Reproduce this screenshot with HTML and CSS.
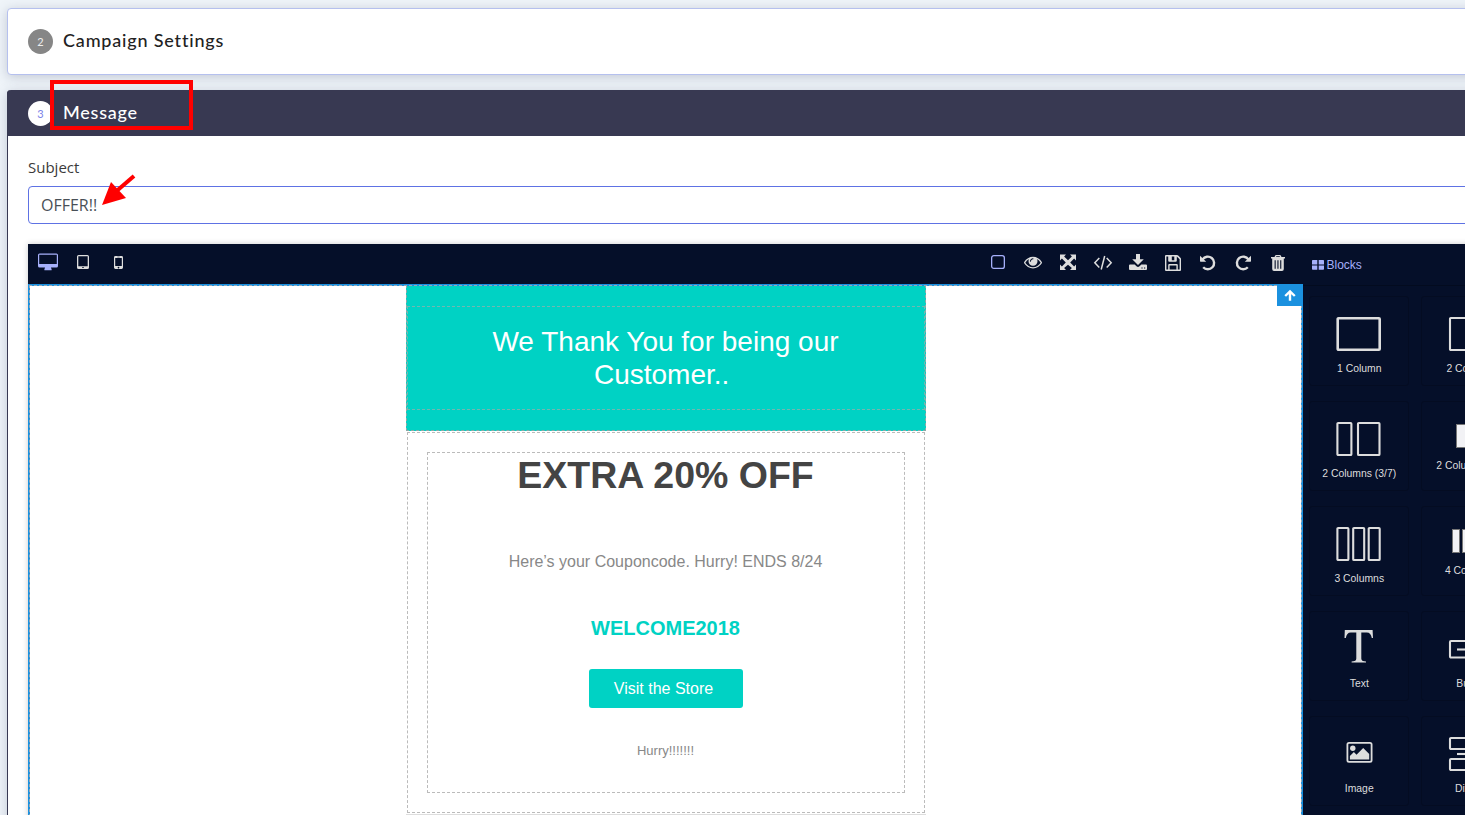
FILE: index.html
```html
<!DOCTYPE html>
<html lang="en">
<head>
<meta charset="utf-8">
<title>Campaign</title>
<link rel="stylesheet" href="styles.css">
</head>
<body>
<main class="page">
  <section class="card settings">
    <span class="step">2</span><h2 class="card-title title-settings">Campaign Settings</h2>
  </section>
  <section class="card message">
    <header class="message-head">
      <span class="step active">3</span><h2 class="card-title title-message">Message</h2>
    </header>
    <div class="message-body">
      <label class="subject-label">Subject</label>
      <div class="subject-input"><span class="subject-value">OFFER!!</span></div>
      <div class="editor">
        <div class="workspace">
          <div class="toolbar">
            <div class="tools devices">
              <span class="tool lit"><svg width="20" height="18" viewBox="0 0 20 18"><path fill="currentColor" fill-rule="evenodd" d="M1.600 .5h16.800Q20 .5 20 2.100v10.800q0 1.600-1.600 1.600H13q0 .9.600 1.600v1.200H6.400v-1.200q.6-.7.6-1.600H1.600Q0 14.500 0 12.900V2.100Q0 .5 1.600.5zM1.200 1.700v9.300h17.600V1.700z"/></svg></span>
              <span class="tool"><svg width="12" height="16" viewBox="0 0 12 16"><path fill="currentColor" fill-rule="evenodd" d="M1.600 1h8.800Q12 1 12 2.600v10.800q0 1.600-1.600 1.600H1.600Q0 15 0 13.400V2.600Q0 1 1.600 1zM1.300 2.300v9.900h9.400V2.300zM5.300 13.100v1h1.400v-1z"/></svg></span>
              <span class="tool phone"><svg width="9" height="16" viewBox="0 0 9 16"><path fill="currentColor" fill-rule="evenodd" d="M1.400 2h6.200Q9 2 9 3.400v10.200Q9 15 7.600 15H1.400Q0 15 0 13.600V3.400Q0 2 1.400 2zM1.200 4.100v8h6.600v-8zM3.300 2.800v.5h2.400v-.5zM4.500 12.800a.8.800 0 1 0 .01 0z"/></svg></span>
            </div>
            <div class="tools actions">
              <span class="tool lit"><svg width="16" height="16" viewBox="0 0 16 16"><rect x="1.650" y="1.650" width="12.700" height="12.700" rx="2.200" fill="none" stroke="currentColor" stroke-width="1.300"/></svg></span>
              <span class="tool"><svg width="18" height="18" viewBox="0 0 1792 1792"><path fill="currentColor" d="M1664 960q-152-236-381-353 61 104 61 225 0 185-131.500 316.500t-316.500 131.500-316.500-131.500-131.500-316.500q0-121 61-225-229 117-381 353 133 205 333.500 326.500t434.500 121.500 434.500-121.500 333.500-326.500zm-720-384q0-20-14-34t-34-14q-125 0-214.500 89.500t-89.500 214.500q0 20 14 34t34 14 34-14 14-34q0-86 61-147t147-61q20 0 34-14t14-34zm848 384q0 34-20 69-140 230-376.500 368.500t-499.500 138.500-499.500-139-376.500-368q-20-35-20-69t20-69q140-229 376.500-368t499.500-139 499.500 139 376.500 368q20 35 20 69z"/></svg></span>
              <span class="tool"><svg width="16" height="16" viewBox="0 0 16 16"><path fill="currentColor" d="M0 .5h6L4.100 2.400 8 6.300l3.900-3.900L10 .5h6v6l-1.900-1.900L10.200 8.500l3.900 3.900 1.900-1.900v5.500h-6l1.900-1.900L8 10.700l-3.900 3.400L6 16H0v-5.500l1.900 1.900 3.900-3.900L1.900 4.600 0 6.500z"/></svg></span>
              <span class="tool"><svg width="20" height="16" viewBox="0 0 20 16"><path fill="none" stroke="currentColor" stroke-width="1.500" d="M6.300 4 1.800 8.800l4.500 4.800M13.700 4l4.500 4.800-4.500 4.800M11.700 2 8.200 15.500"/></svg></span>
              <span class="tool"><svg width="18" height="17" viewBox="0 0 18 17"><path fill="currentColor" fill-rule="evenodd" d="M7 0h4v5.200h3.800L9 11 3.200 5.200H7zM1 10.500h4.700L7.500 12.300q1.500 1.200 3 0l1.800-1.800H17q1 0 1 1V15q0 1-1 1H1q-1 0-1-1v-3.500q0-1 1-1zM12.400 13.400v1h1.200v-1zm2.600 0v1h1.200v-1z"/></svg></span>
              <span class="tool low"><svg width="16" height="16" viewBox="0 0 16 16"><path fill="currentColor" fill-rule="evenodd" d="M1 0h11q.6 0 1.200.6l2.200 2.200q.6.600.6 1.200v11q0 1-1 1H1q-1 0-1-1V1Q0 0 1 0zM1.400 1.400v13.200h1.800V10q0-1 1-1h7.600q1 0 1 1v4.600h1.800V4.200L11.800 1.400v4.300q0 1-1 1H4.200q-1 0-1-1V1.400zM6.800 1.400v3.900h2.500V1.400zM4.600 10.400v4.200h6.800v-4.200z"/></svg></span>
              <span class="tool low"><svg width="16" height="16" viewBox="0 0 16 16"><path fill="none" stroke="currentColor" stroke-width="2.400" d="M2.600 4.400A6.300 6.300 0 1 1 3.200 12.300"/><path fill="currentColor" d="M0 .7 6.200 6.700H.6Q0 6.700 0 6z"/></svg></span>
              <span class="tool low"><svg class="flip" width="16" height="16" viewBox="0 0 16 16"><path fill="none" stroke="currentColor" stroke-width="2.400" d="M2.600 4.400A6.300 6.300 0 1 1 3.200 12.300"/><path fill="currentColor" d="M0 .7 6.200 6.700H.6Q0 6.700 0 6z"/></svg></span>
              <span class="tool low"><svg width="14" height="16" viewBox="0 0 14 16"><path fill="currentColor" fill-rule="evenodd" d="M5 0h4q.6 0 .9.700L10.500 2H14v1.500h-1.200V14q0 2-1.800 2H3q-1.800 0-1.800-2V3.500H0V2h3.500l.6-1.300Q4.400 0 5 0zM5.400 1.200 5 2h4l-.4-.8zM3.600 5.200v8.600h1.100V5.200zm2.800 0v8.600h1.100V5.200zm2.800 0v8.600h1.100V5.200z"/></svg></span>
            </div>
          </div>
          <div class="canvas">
            <span class="select-parent"><svg width="12" height="11" viewBox="0 0 12 11"><path d="M6 10.800V2M1.200 6 6 1.400 10.800 6" fill="none" stroke="#fff" stroke-width="2.400"/></svg></span>
            <div class="mail">
              <div class="hero"><div class="hero-cell"><p class="hero-text">We Thank You for being our<br>Customer..&nbsp;</p></div></div>
              <div class="offer">
                <div class="offer-cell">
                  <h1 class="offer-title">EXTRA 20% OFF</h1>
                  <p class="coupon-text">Here’s your Couponcode. Hurry! ENDS 8/24</p>
                  <p class="coupon-code">WELCOME2018</p>
                  <a class="store-button">Visit the Store</a>
                  <p class="hurry">Hurry!!!!!!!</p>
                </div>
              </div>
              <div class="mail-end"></div>
            </div>
          </div>
        </div>
        <aside class="panel">
          <div class="panel-tab"><svg width="12" height="10" viewBox="0 0 12 10"><path fill="currentColor" d="M.8 0h4.500v4.400H0V.8Q0 0 .8 0zm5.900 0h4.500q.8 0 .8.800v3.600H6.700zM0 5.400h5.300v4.400H.8Q0 9.800 0 9zm6.700 0H12V9q0 .8-.8.800H6.700z"/></svg><span>Blocks</span></div>
          <div class="blocks">
            <div class="block"><svg width="46" height="36" viewBox="0 0 46 36"><rect class="ln3" x="1.700" y="2.200" width="42" height="31.600" rx=".8"/></svg><span>1 Column</span></div>
            <div class="block"><svg width="46" height="36" viewBox="0 0 46 36"><rect class="ln" x="2" y="2" width="18" height="32" rx=".8"/><rect class="ln" x="25" y="2" width="18" height="32" rx=".8"/></svg><span>2 Columns</span></div>
            <div class="block"><svg width="46" height="36" viewBox="0 0 46 36"><rect class="ln" x="1.400" y="2" width="14" height="32" rx=".8"/><rect class="ln" x="22" y="2" width="21.500" height="32" rx=".8"/></svg><span>2 Columns (3/7)</span></div>
            <div class="block short"><svg width="30" height="24" viewBox="0 0 30 24"><rect class="solid" x=".5" y=".5" width="10" height="23"/><rect class="solid" x="13" y=".5" width="16" height="23"/></svg><span>2 Columns 3/7</span></div>
            <div class="block"><svg width="46" height="36" viewBox="0 0 46 36"><rect class="ln" x="1.400" y="2" width="11" height="32" rx=".8"/><rect class="ln" x="17.200" y="2" width="11" height="32" rx=".8"/><rect class="ln" x="32.700" y="2" width="11" height="32" rx=".8"/></svg><span>3 Columns</span></div>
            <div class="block short"><svg width="38" height="24" viewBox="0 0 38 24"><rect class="solid" x=".5" y=".5" width="7" height="23"/><rect class="solid" x="10.500" y=".5" width="7" height="23"/><rect class="solid" x="20.500" y=".5" width="7" height="23"/><rect class="solid" x="30.500" y=".5" width="7" height="23"/></svg><span>4 Columns</span></div>
            <div class="block"><svg width="46" height="36" viewBox="0 0 46 36"><path fill="currentColor" d="M8.800-1h27.800l.4 8h-1.200q-.8-5.600-5-5.600h-5.500v26q0 2.500 3 2.800l1.700.3v.9H15.600v-.9l1.700-.3q3-.3 3-2.800v-26h-5.500q-4.200 0-5 5.600H8.500z"/></svg><span>Text</span></div>
            <div class="block"><svg width="46" height="36" viewBox="0 0 46 36"><rect class="ln" x="2" y="10" width="42" height="16.500" rx="1"/><path class="ln" d="M9 18.500h28"/></svg><span>Button</span></div>
            <div class="block"><svg width="46" height="36" viewBox="0 0 46 36"><rect x="11.400" y="6.900" width="24.200" height="19" rx="1.600" fill="none" stroke="currentColor" stroke-width="1.800"/><circle cx="16.800" cy="12.200" r="2.700" fill="currentColor"/><path fill="currentColor" d="M13.900 23.600V20l4-4 2.600 2.700 6.700-6.700 6 6v5.600z"/></svg><span>Image</span></div>
            <div class="block"><svg width="46" height="36" viewBox="0 0 46 36"><rect class="ln" x="2" y="2" width="42" height="11" rx="1"/><path class="ln" d="M9 18h28"/><rect class="ln" x="2" y="23" width="42" height="11" rx="1"/></svg><span>Divider</span></div>
          </div>
        </aside>
      </div>
    </div>
  </section>
</main>
<div class="highlight"></div>
<svg class="arrow" width="36" height="34" viewBox="0 0 36 34"><path d="M34 2 16 17.500" stroke="#f00" stroke-width="4"/><path fill="#f00" d="M2 31 11 8l15 16z"/></svg>
</body>
</html>
```

FILE: styles.css
```css
* { box-sizing: border-box; }
html, body { margin: 0; height: 815px; overflow: hidden; }
body { background: #eff4f9; font-family: "Open Sans", sans-serif; color: #3a3a3a; }
p, h1, h2 { margin: 0; }
svg { display: block; flex: none; overflow: visible; }
.page { width: 100%; height: 815px; overflow: hidden; padding: 8px 0 0 7px; }
.card { width: 1593px; background: #fff; border-radius: 4px; box-shadow: 0 2px 12px rgba(70, 80, 110, .27); }
.settings { height: 67px; border: 1px solid #b5c0ee; display: flex; align-items: center; padding: 0 0 0 20px; }
.step { width: 25px; height: 25px; border-radius: 50%; background: #868686; color: #eee; font: 11px/26px Lato, sans-serif; text-align: center; margin-right: 10px; flex: none; }
.step.active { background: #fff; color: #7b83e8; }
.card-title { font: 500 18px/24px Lato, sans-serif; color: #222; white-space: nowrap; }
.title-settings { letter-spacing: .82px; padding-bottom: 4px; }
.title-message { letter-spacing: .78px; padding-bottom: 2px; color: #fff; }
.message { margin-top: 15px; height: 760px; border-left: 1px solid #383952; }
.message-head { height: 46px; margin-left: -1px; padding-left: 21px; background: #383952; border-radius: 4px 0 0 0; display: flex; align-items: center; }
.message-body { padding: 19px 0 0 20px; }
.subject-label { display: block; font-size: 15px; line-height: 24px; height: 31px; }
.subject-input { height: 38px; border: 1px solid #5e72e4; border-radius: 4px; padding-left: 12px; font-size: 16px; line-height: 36px; color: #495057; }
.editor { display: flex; margin-top: 20px; height: 600px; box-shadow: 0 0 6px rgba(0, 0, 0, .2); }
.workspace { width: 1275px; flex: none; }
.toolbar { height: 40px; background: #050f29; display: flex; justify-content: space-between; padding: 0 7.500px 4px 2px; }
.tools { display: flex; }
.tool { width: 35px; display: flex; align-items: center; justify-content: center; color: #ddd; }
.tool.lit { color: #a6b0fa; }
.tool.low { padding-top: 1px; }
.tool.phone { padding-left: 1px; }
.flip { transform: scaleX(-1); }
.canvas { position: relative; height: 560px; background: #fff; border: 2px solid #1b91df; border-top-width: 1px; padding: 0 0 0 376px; }
.canvas::after { content: ""; position: absolute; inset: 0 -1px; background: none; border: 1px dashed #9aa7b2; }
.canvas::before { content: ""; position: absolute; inset: 0 0 auto; height: 1px; background: #1b91df; }
.select-parent { position: absolute; z-index: 1; right: -2px; top: -1px; width: 26px; height: 22px; background: #1b91df; display: flex; align-items: center; justify-content: center; }
.mail { width: 520px; font-family: "Liberation Sans", Arial, sans-serif; text-align: center; }
.hero { height: 146px; background: #00d2c4; padding: 21px 0 0 1px; outline: 1px dashed #8ba9a6; outline-offset: -1px; }
.hero-cell { height: 104px; width: 518px; border: 1px dashed #72b7b0; padding: 18px 1px 0 0; }
.hero-text { color: #fff; font-size: 28px; line-height: 33px; }
.offer { width: 518px; height: 381px; margin: 1px 0 0 1px; border: 1px dashed #bbb; padding: 19px; }
.offer-cell { height: 341px; border: 1px dashed #bbb; display: flex; flex-direction: column; align-items: center; }
.offer-title { font-size: 37.500px; line-height: 44px; color: #444; white-space: nowrap; padding-right: 1px; }
.coupon-text { margin-top: 55px; padding-right: 1px; font-size: 16px; line-height: 20px; color: #888; }
.coupon-code { margin-top: 44px; padding-right: 1px; font-size: 20px; line-height: 24px; font-weight: bold; color: #00d2c4; }
.store-button { margin-top: 29px; width: 154px; height: 39px; padding-right: 5px; border-radius: 3px; background: #00d2c4; color: #fff; font-size: 16px; line-height: 39px; }
.hurry { margin-top: 34px; padding-right: 1px; font-size: 13px; line-height: 18px; color: #888; }
.mail-end { height: 20px; border-top: 1px solid #ddd; margin-top: 1px; }
.panel { flex: none; width: 290px; background: #050f29; font-family: "Liberation Sans", Arial, sans-serif; }
.panel-tab { height: 42px; border-bottom: 1px solid #030b1f; display: flex; align-items: center; padding-left: 9px; gap: 2.500px; font-size: 12px; color: #a6b0fa; }
.blocks { display: grid; grid-template-columns: 100px 100px; grid-auto-rows: 90px; gap: 15px 12px; padding: 10px 0 0 6px; }
.block { border: 1px solid #040c22; border-radius: 3px; color: #ddd; display: flex; flex-direction: column; align-items: center; padding-top: 19px; font-size: 10.400px; line-height: 14px; white-space: nowrap; }
.block span { margin-top: 10px; padding-left: .5px; }
.block.short { padding-top: 22px; }
.block.short span { margin-top: 11px; padding-right: 3px; }
.ln, .ln3 { fill: none; stroke: #ddd; stroke-width: 2.100px; }
.ln3 { stroke-width: 2.600px; }
.solid { fill: #f2f2f5; stroke: #777; }
.highlight { position: absolute; left: 50px; top: 80px; width: 143px; height: 50px; border: 4px solid #f00; }
.arrow { position: absolute; left: 100px; top: 174px; }
```
